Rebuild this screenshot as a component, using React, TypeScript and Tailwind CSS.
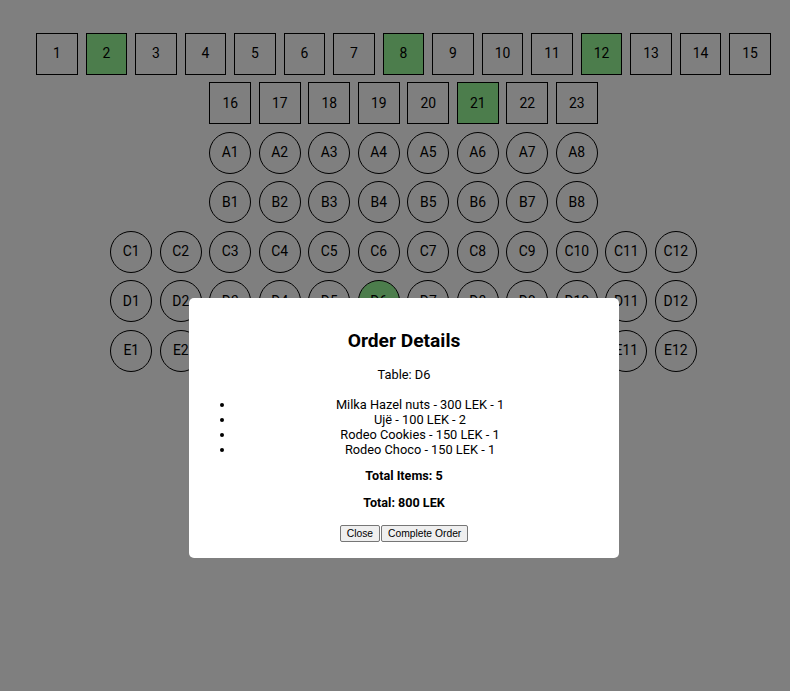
import { clsx } from 'clsx';

// ── Seating data ─────────────────────────────────────────────────────────────

type Seat = { id: string; shape: 'square' | 'circle'; busy?: boolean };

const range = (n: number, f: (i: number) => string) =>
  Array.from({ length: n }, (_, i) => f(i + 1));

const ROWS: Seat[][] = [
  range(15, i => String(i)).map(id => ({ id, shape: 'square', busy: ['2', '8', '12'].includes(id) })),
  range(8, i => String(i + 15)).map(id => ({ id, shape: 'square', busy: id === '21' })),
  range(8, i => `A${i}`).map(id => ({ id, shape: 'circle' })),
  range(8, i => `B${i}`).map(id => ({ id, shape: 'circle' })),
  range(12, i => `C${i}`).map(id => ({ id, shape: 'circle' })),
  range(12, i => `D${i}`).map(id => ({ id, shape: 'circle', busy: id === 'D6' })),
  range(12, i => `E${i}`).map(id => ({ id, shape: 'circle' })),
];

const ORDER = [
  'Milka Hazel nuts - 300 LEK - 1',
  'Ujë - 100 LEK - 2',
  'Rodeo Cookies - 150 LEK - 1',
  'Rodeo Choco - 150 LEK - 1',
];

function SeatBox({ seat }: { seat: Seat }) {
  return (
    <div
      className={clsx(
        'm-[3.96px] flex h-[41.6px] w-[41.6px] items-center justify-center border border-black text-[13.9px] text-black',
        seat.shape === 'circle' && 'rounded-full',
        seat.busy ? 'bg-[#98fb98]' : 'bg-white',
      )}
    >
      {seat.id}
    </div>
  );
}

// ── Order modal ──────────────────────────────────────────────────────────────

function OrderModal() {
  return (
    <div className="flex w-[430px] flex-col items-center rounded-[5px] bg-white px-[14px] pb-[16px] pt-[20px] text-center text-black">
      <h2 className="mt-[9px] text-[19.2px] font-bold leading-[28px]">Order Details</h2>
      <p className="mt-[12px] text-[12.8px] leading-[16px]">Table: D6</p>
      <ul className="mt-[13.5px] w-full list-disc pl-[32px] text-[12.8px] leading-[15px]">
        {ORDER.map(line => <li key={line}>{line}</li>)}
      </ul>
      <p className="mt-[11px] text-[12.6px] font-bold leading-[16px]">Total Items: 5</p>
      <p className="mt-[11px] text-[12.6px] font-bold leading-[16px]">Total: 800 LEK</p>
      <div className="mt-[14px] flex font-['Liberation_Sans',Arial,sans-serif] text-[10.3px] leading-[13px]">
        <button className="rounded-[2px] border border-[#767676] bg-[#efefef] px-[6px] py-[1px]">Close</button>
        <button className="ml-[1px] rounded-[2px] border border-[#767676] bg-[#efefef] px-[6px] py-[1px]">Complete Order</button>
      </div>
    </div>
  );
}

export default function App() {
  return (
    <div className="relative min-h-[691px] bg-white font-['Roboto',sans-serif]">
      <div className="flex flex-col items-center pl-[17px] pt-[29px]">
        {ROWS.map((row, r) => (
          <div key={r} className="flex justify-center">
            {row.map(seat => <SeatBox key={seat.id} seat={seat} />)}
          </div>
        ))}
      </div>

      <div className="fixed inset-0 flex justify-center bg-black/50 pl-[18px] pt-[298px]">
        <div>
          <OrderModal />
        </div>
      </div>
    </div>
  );
}
